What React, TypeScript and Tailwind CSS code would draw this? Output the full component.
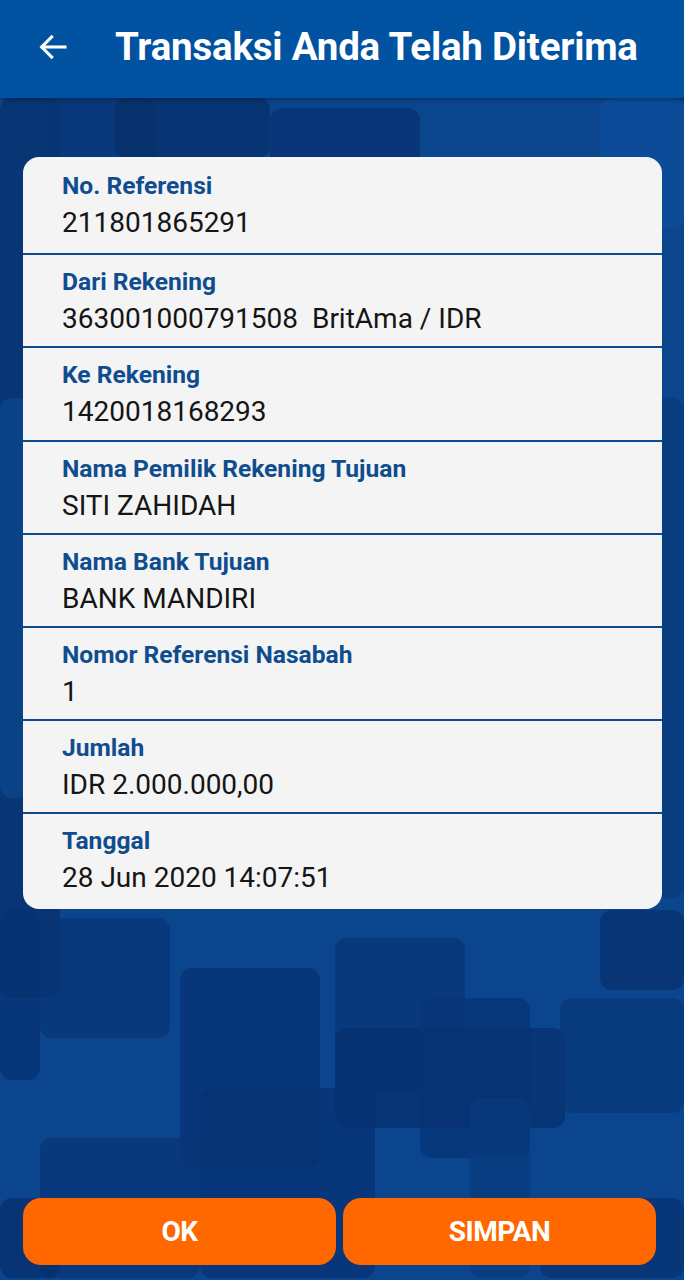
import React from 'react';

const rows = [
  { label: 'No. Referensi', value: '211801865291' },
  { label: 'Dari Rekening', value: '363001000791508\u00a0\u00a0BritAma / IDR' },
  { label: 'Ke Rekening', value: '1420018168293' },
  { label: 'Nama Pemilik Rekening Tujuan', value: 'SITI ZAHIDAH' },
  { label: 'Nama Bank Tujuan', value: 'BANK MANDIRI' },
  { label: 'Nomor Referensi Nasabah', value: '1' },
  { label: 'Jumlah', value: 'IDR 2.000.000,00' },
  { label: 'Tanggal', value: '28 Jun 2020 14:07:51' },
];

const heights = ['h-[98px] pt-[16px]', 'h-[93px] pt-[14px]', 'h-[94px] pt-[14px]', 'h-[93px] pt-[14px]', 'h-[93px] pt-[14px]', 'h-[93px] pt-[14px]', 'h-[93px] pt-[14px]', 'h-[95px] pt-[14px]'];

// decorative tiles of the background
const tiles: [number, number, number, number, string][] = [
  [0, 0, 60, 900, '#072f68'],
  [45, 0, 110, 70, '#073574'],
  [115, 0, 155, 60, '#062d66'],
  [270, 10, 150, 60, '#073170'],
  [600, 0, 84, 130, '#0b4f9c'],
  [0, 300, 30, 400, '#0a4890'],
  [640, 300, 44, 500, '#08397a'],
  [0, 812, 40, 170, '#063272'],
  [40, 820, 130, 120, '#073476'],
  [180, 870, 140, 200, '#063272'],
  [335, 840, 130, 155, '#073476'],
  [335, 930, 230, 100, '#062f6c'],
  [560, 900, 124, 115, '#073678'],
  [600, 812, 84, 80, '#062f6c'],
  [200, 990, 175, 190, '#063272'],
  [40, 1040, 160, 140, '#073476'],
  [0, 1100, 60, 80, '#062e6a'],
  [420, 900, 110, 160, '#073375'],
  [540, 1100, 144, 80, '#063070'],
  [470, 1000, 60, 180, '#083a7e'],
];

const App: React.FC = () => {
  return (
    <div
      className="relative flex flex-col w-[684px] min-h-[1280px] overflow-hidden bg-[#0a458d]"
      style={{ fontFamily: 'Roboto, "Noto Sans", sans-serif' }}
    >
      <svg className="absolute left-0 top-[98px]" width="684" height="1182">
        {tiles.map(([x, y, w, h, c], i) => (
          <rect key={i} x={x} y={y} width={w} height={h} rx="12" fill={c} opacity="0.7" />
        ))}
      </svg>

      <header className="relative z-10 h-[98px] bg-[#0152a1] flex items-center shadow-[0_2px_4px_rgba(0,0,0,0.3)]">
        <svg className="ml-[37px] mt-[-4px]" width="32" height="32" viewBox="0 0 24 24" fill="none" stroke="white" strokeWidth="2.3" strokeLinecap="square">
          <path d="M21 12H4" />
          <path d="M11 4.5L3.5 12L11 19.5" />
        </svg>
        <h1 className="ml-[46px] mt-[-4px] text-[38.5px] font-bold text-white tracking-[-0.2px]">Transaksi Anda Telah Diterima</h1>
      </header>

      <main className="relative z-10 flex-1 flex flex-col pl-[23px] pr-[22px] pt-[59px]">
        <div className="bg-[#f4f4f4] rounded-[16px] overflow-hidden">
          {rows.map((r, i) => (
            <div
              key={r.label}
              className={`px-[39px] ${heights[i]} ${i < rows.length - 1 ? 'border-b-2 border-[#0e4a8c]' : ''}`}
            >
              <div className="text-[24.6px] leading-[26px] font-bold text-[#0f4d8f]">{r.label}</div>
              <div className="mt-[8px] text-[28px] leading-[32px] text-[#151515]">{r.value}</div>
            </div>
          ))}
        </div>
      </main>

      <footer className="relative z-10 flex gap-[7px] pl-[23px] pr-[28px] pb-[15px] mt-auto">
        <button className="flex-1 h-[67px] rounded-[18px] bg-[#ff6700] text-white text-[28px] font-bold tracking-[-0.5px]">OK</button>
        <button className="flex-1 h-[67px] rounded-[18px] bg-[#ff6700] text-white text-[28px] font-bold tracking-[-0.5px]">SIMPAN</button>
      </footer>
    </div>
  );
};

export default App;
